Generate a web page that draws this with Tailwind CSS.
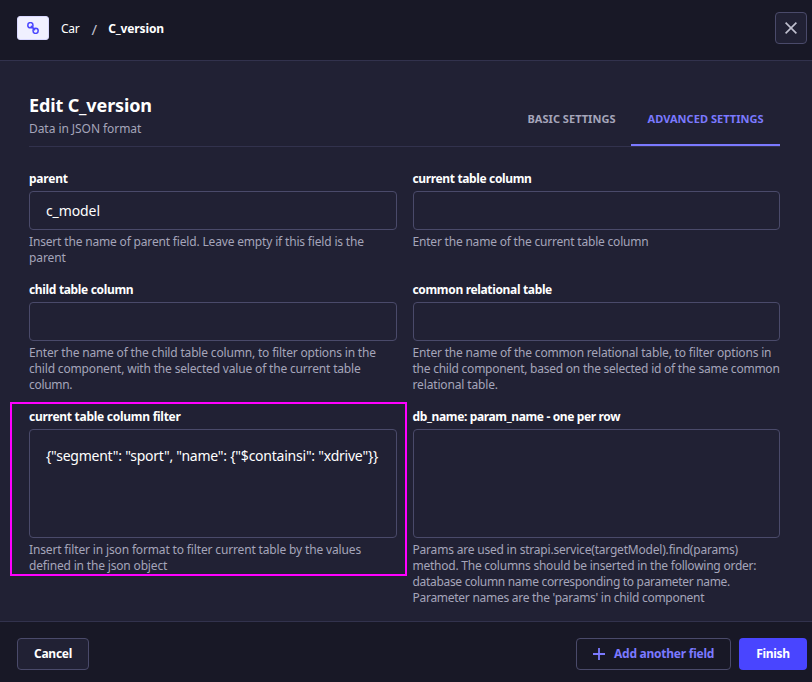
<!DOCTYPE html>
<html lang="en">
<head>
<meta charset="utf-8">
<title>Edit C_version</title>
<script src="https://cdn.jsdelivr.net/npm/@tailwindcss/browser@4"></script>
</head>
<body class="h-[682px] w-[812px] overflow-hidden bg-[#212134] font-['Noto_Sans',sans-serif] text-xs text-white">
<div class="relative flex h-full flex-col">
  <header class="flex h-[61px] shrink-0 items-center border-b border-[#32324d] bg-[#181826] pb-[5px] pl-[17px] pr-[5px]">
    <div class="flex h-6 w-8 items-center justify-center rounded-[3px] border border-[#d9d8ff] bg-[#f0f0ff]">
      <svg class="size-3" viewBox="0 0 12 12" fill="none" stroke="#4945ff" stroke-width="1.5" stroke-linecap="round"><circle cx="3.4" cy="3.2" r="2.6"/><circle cx="8.6" cy="8.8" r="2.6"/><path stroke-width="1.7" d="M4.4 4.3 7.6 7.7"/></svg>
    </div>
    <span class="ml-3 whitespace-nowrap pt-0.5 tracking-[-0.25px]">Car</span>
    <span class="ml-3 pt-0.5 text-[15px]/4 text-[#c0c0cf]">/</span>
    <span class="ml-[11px] whitespace-nowrap pt-0.5 font-bold tracking-[-0.12px]">C_version</span>
    <button class="ml-auto flex size-8 items-center justify-center rounded border border-[#4a4a6a] bg-[#212134]">
      <svg class="size-3" viewBox="0 0 12 12" fill="none" stroke="#c0c0cf" stroke-width="1.6"><path d="M.6.6 11.4 11.4M11.4.6.6 11.4"/></svg>
    </button>
  </header>
  <main class="flex-1 pl-[29px] pr-8 pt-[33px]">
    <div class="flex h-[53px] justify-between border-b border-[#32324d]">
      <div>
        <h1 class="text-lg/[22px] font-bold"><span class="whitespace-nowrap tracking-[-0.13px]">Edit C_version</span></h1>
        <p class="mt-[5px] text-xs/4 text-[#a5a5ba]"><span class="whitespace-nowrap tracking-[-0.06px]">Data in JSON format</span></p>
      </div>
      <nav class="flex text-[11px]/4 font-bold">
        <div class="w-[119px] pl-[15.5px] pt-[17px] text-[#a5a5ba]"><span class="whitespace-nowrap tracking-[0.03px]">BASIC SETTINGS</span></div>
        <div class="h-[52px] w-[149px] border-b-2 border-[#7b79ff] pl-[16.5px] pt-[17px] text-[#7b79ff]"><span class="whitespace-nowrap tracking-[0.05px]">ADVANCED SETTINGS</span></div>
      </nav>
    </div>
    <div class="mt-6 grid grid-cols-2 gap-x-4">
      <section class="h-[111px]">
        <label class="block h-5 text-xs/4 font-bold"><span class="whitespace-nowrap tracking-[-0.22px]">parent</span></label>
        <div class="flex h-[39px] items-center rounded border border-[#4a4a6a] px-4 text-sm"><span class="whitespace-nowrap tracking-[-0.1px]">c_model</span></div>
        <p class="mt-1 whitespace-nowrap text-xs/4 text-[#a5a5ba]"><span class="tracking-[-0.17px]">Insert the name of parent field. Leave empty if this field is the</span><br><span class="tracking-[-0.1px]">parent</span></p>
      </section>
      <section>
        <label class="block h-5 text-xs/4 font-bold"><span class="whitespace-nowrap tracking-[-0.36px]">current table column</span></label>
        <div class="h-[39px] rounded border border-[#4a4a6a]"></div>
        <p class="mt-1 whitespace-nowrap text-xs/4 text-[#a5a5ba]"><span class="tracking-[-0.2px]">Enter the name of the current table column</span></p>
      </section>
      <section class="h-[127px]">
        <label class="block h-5 text-xs/4 font-bold"><span class="whitespace-nowrap tracking-[-0.33px]">child table column</span></label>
        <div class="h-[39px] rounded border border-[#4a4a6a]"></div>
        <p class="mt-1 whitespace-nowrap text-xs/4 text-[#a5a5ba]"><span class="tracking-[-0.17px]">Enter the name of the child table column, to filter options in the</span><br><span class="tracking-[-0.17px]">child component, with the selected value of the current table</span><br><span class="tracking-[-0.3px]">column.</span></p>
      </section>
      <section>
        <label class="block h-5 text-xs/4 font-bold"><span class="whitespace-nowrap tracking-[-0.34px]">common relational table</span></label>
        <div class="h-[39px] rounded border border-[#4a4a6a]"></div>
        <p class="mt-1 whitespace-nowrap text-xs/4 text-[#a5a5ba]"><span class="tracking-[-0.18px]">Enter the name of the common relational table, to filter options in</span><br><span class="tracking-[-0.24px]">the child component, based on the selected id of the same common</span><br><span class="tracking-[-0.15px]">relational table.</span></p>
      </section>
      <section>
        <label class="block h-5 text-xs/4 font-bold"><span class="whitespace-nowrap tracking-[-0.27px]">current table column filter</span></label>
        <div class="h-[109px] rounded border border-[#4a4a6a] px-4 pt-[15px] text-sm/[21px]"><span class="whitespace-nowrap tracking-[-0.23px]">{"segment": "sport", "name": {"$containsi": "xdrive"}}</span></div>
        <p class="mt-1 whitespace-nowrap text-xs/4 text-[#a5a5ba]"><span class="tracking-[-0.15px]">Insert filter in json format to filter current table by the values</span><br><span class="tracking-[-0.17px]">defined in the json object</span></p>
      </section>
      <section>
        <label class="block h-5 text-xs/4 font-bold"><span class="whitespace-nowrap tracking-[-0.36px]">db_name: param_name - one per row</span></label>
        <div class="h-[109px] rounded border border-[#4a4a6a]"></div>
        <p class="mt-1 whitespace-nowrap text-xs/4 text-[#a5a5ba]"><span class="tracking-[-0.2px]">Params are used in strapi.service(targetModel).find(params)</span><br><span class="tracking-[-0.24px]">method. The columns should be inserted in the following order:</span><br><span class="tracking-[-0.31px]">database column name corresponding to parameter name.</span><br><span class="tracking-[-0.27px]">Parameter names are the 'params' in child component</span></p>
      </section>
    </div>
  </main>
  <footer class="flex h-[61px] shrink-0 items-start border-t border-[#32324d] bg-[#181826] pl-[17px] pr-[5px] pt-4 font-bold">
    <button class="flex h-8 w-[72px] items-center justify-center rounded border border-[#4a4a6a] bg-[#212134]"><span class="tracking-[-0.25px]">Cancel</span></button>
    <button class="ml-auto flex h-8 w-[155px] items-center rounded border border-[#4a4a6a] pl-4 text-[#7b79ff]">
      <svg class="mr-[9px] size-3" viewBox="0 0 12 12" fill="none" stroke="#7b79ff" stroke-width="1.8"><path d="M6 0V12M0 6H12"/></svg>
      <span class="whitespace-nowrap tracking-[-0.25px]">Add another field</span>
    </button>
    <button class="ml-2 flex h-8 w-[68px] items-center justify-center rounded bg-[#4945ff]"><span class="tracking-[-0.3px]">Finish</span></button>
  </footer>
  <div class="pointer-events-none absolute left-[10px] top-[402px] h-[174px] w-[397px] border-2 border-[#ff00ff]"></div>
</div>
</body>
</html>
